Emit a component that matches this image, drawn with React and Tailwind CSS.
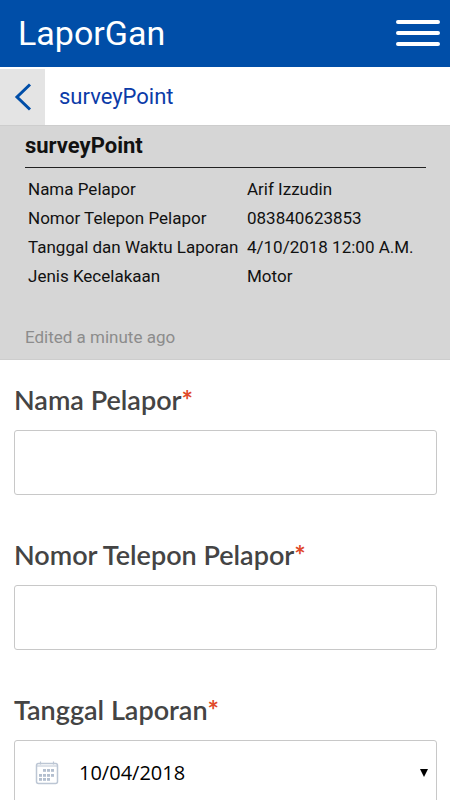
import { useState } from "react";

const DETAILS = [
  ["Nama Pelapor", "Arif Izzudin"],
  ["Nomor Telepon Pelapor", "083840623853"],
  ["Tanggal dan Waktu Laporan", "4/10/2018 12:00 A.M."],
  ["Jenis Kecelakaan", "Motor"],
];

const DATES = ["10/04/2018", "11/04/2018", "12/04/2018"];

const CALENDAR_DOTS = [
  [8, 9], [12, 9], [16, 9],
  [4, 14], [8, 14], [12, 14], [16, 14],
  [4, 18], [8, 18], [12, 18],
];

function CalendarIcon() {
  return (
    <svg width="24" height="24" viewBox="0 0 24 24" fill="none" className="shrink-0" aria-hidden="true">
      <rect x="1.5" y="2.5" width="21" height="20" rx="2" stroke="#bcc6d4" strokeWidth="1.5" />
      <path d="M2 5h20M5.500 0.500v3M18.500 0.500v3" stroke="#bcc6d4" strokeWidth="1.2" />
      {CALENDAR_DOTS.map(([x, y]) => (
        <rect key={`${x}-${y}`} x={x} y={y - 1} width="3" height="2.800" fill="#b3bfcf" />
      ))}
    </svg>
  );
}

function Field({ id, label, children }) {
  return (
    <div>
      <label
        htmlFor={id}
        className="block font-['Lato',sans-serif] text-[27px] leading-8 font-semibold text-[#444]"
      >
        {label}
        <span className="font-bold text-[#e0492a]">*</span>
      </label>
      <div className="mt-3.5 flex h-[65px] items-center rounded-[3px] border border-[#c8c8c8] bg-white">
        {children}
      </div>
    </div>
  );
}

export default function App() {
  const [date, setDate] = useState(DATES[0]);

  return (
    <div className="min-h-screen bg-white font-['Roboto',sans-serif]">
      <header className="flex h-[67px] items-center justify-between bg-[#004ea8] pr-2.5 pb-0.5 pl-[18px]">
        <h1 className="text-[34px] leading-10 text-white">LaporGan</h1>
        <button type="button" aria-label="Menu">
          <svg width="44" height="26" viewBox="0 0 44 26" aria-hidden="true">
            <path d="M2 2h40M2 13h40M2 24h40" stroke="#fff" strokeWidth="4" strokeLinecap="round" />
          </svg>
        </button>
      </header>

      <nav className="flex h-[58px] items-center pt-0.5">
        <button
          type="button"
          aria-label="Kembali"
          className="flex h-full w-[45px] items-center justify-center bg-[#e4e4e4]"
        >
          <svg width="18" height="28" viewBox="0 0 18 28" fill="none" aria-hidden="true">
            <path d="M16 1.500 3 14l13 12.500" stroke="#004ea8" strokeWidth="3" />
          </svg>
        </button>
        <h2 className="pl-3.5 text-[22px] leading-7 text-[#0b3ba8]">surveyPoint</h2>
      </nav>

      <section className="border-y border-[#cdcdcd] bg-[#d6d6d6] pt-1 pr-6 pb-2 pl-[25px]">
        <h3 className="border-b border-[#222] pb-[5px] text-[22px] leading-8 font-bold text-[#111]">
          surveyPoint
        </h3>
        <table className="mt-[7px] w-full text-left text-[17px] leading-[29px] text-[#111]">
          <tbody>
            {DETAILS.map(([label, value]) => (
              <tr key={label}>
                <th scope="row" className="w-[222px] pl-[3px] font-normal whitespace-nowrap">{label}</th>
                <td className="whitespace-nowrap">{value}</td>
              </tr>
            ))}
          </tbody>
        </table>
        <p className="mt-8 text-[17px] leading-7 text-[#8c8c8c]">Edited a minute ago</p>
      </section>

      <form className="flex flex-col gap-11 pt-6 pr-[13px] pb-10 pl-3.5">
        <Field id="nama" label="Nama Pelapor">
          <input id="nama" type="text" className="h-full w-full px-5 text-xl outline-none" />
        </Field>
        <Field id="telepon" label="Nomor Telepon Pelapor">
          <input id="telepon" type="tel" className="h-full w-full px-5 text-xl outline-none" />
        </Field>
        <Field id="tanggal" label="Tanggal Laporan">
          <div className="flex h-full w-full items-center pr-2 pl-5">
            <CalendarIcon />
            <select
              id="tanggal"
              value={date}
              onChange={(e) => setDate(e.target.value)}
              className="h-full flex-1 appearance-none bg-transparent pl-5 font-['Open_Sans',sans-serif] text-xl text-black outline-none"
            >
              {DATES.map((d) => (
                <option key={d}>{d}</option>
              ))}
            </select>
            <svg width="8" height="8" viewBox="0 0 8 8" className="shrink-0" aria-hidden="true">
              <path d="M0 0h8L4 8z" fill="#000" />
            </svg>
          </div>
        </Field>
      </form>
    </div>
  );
}
